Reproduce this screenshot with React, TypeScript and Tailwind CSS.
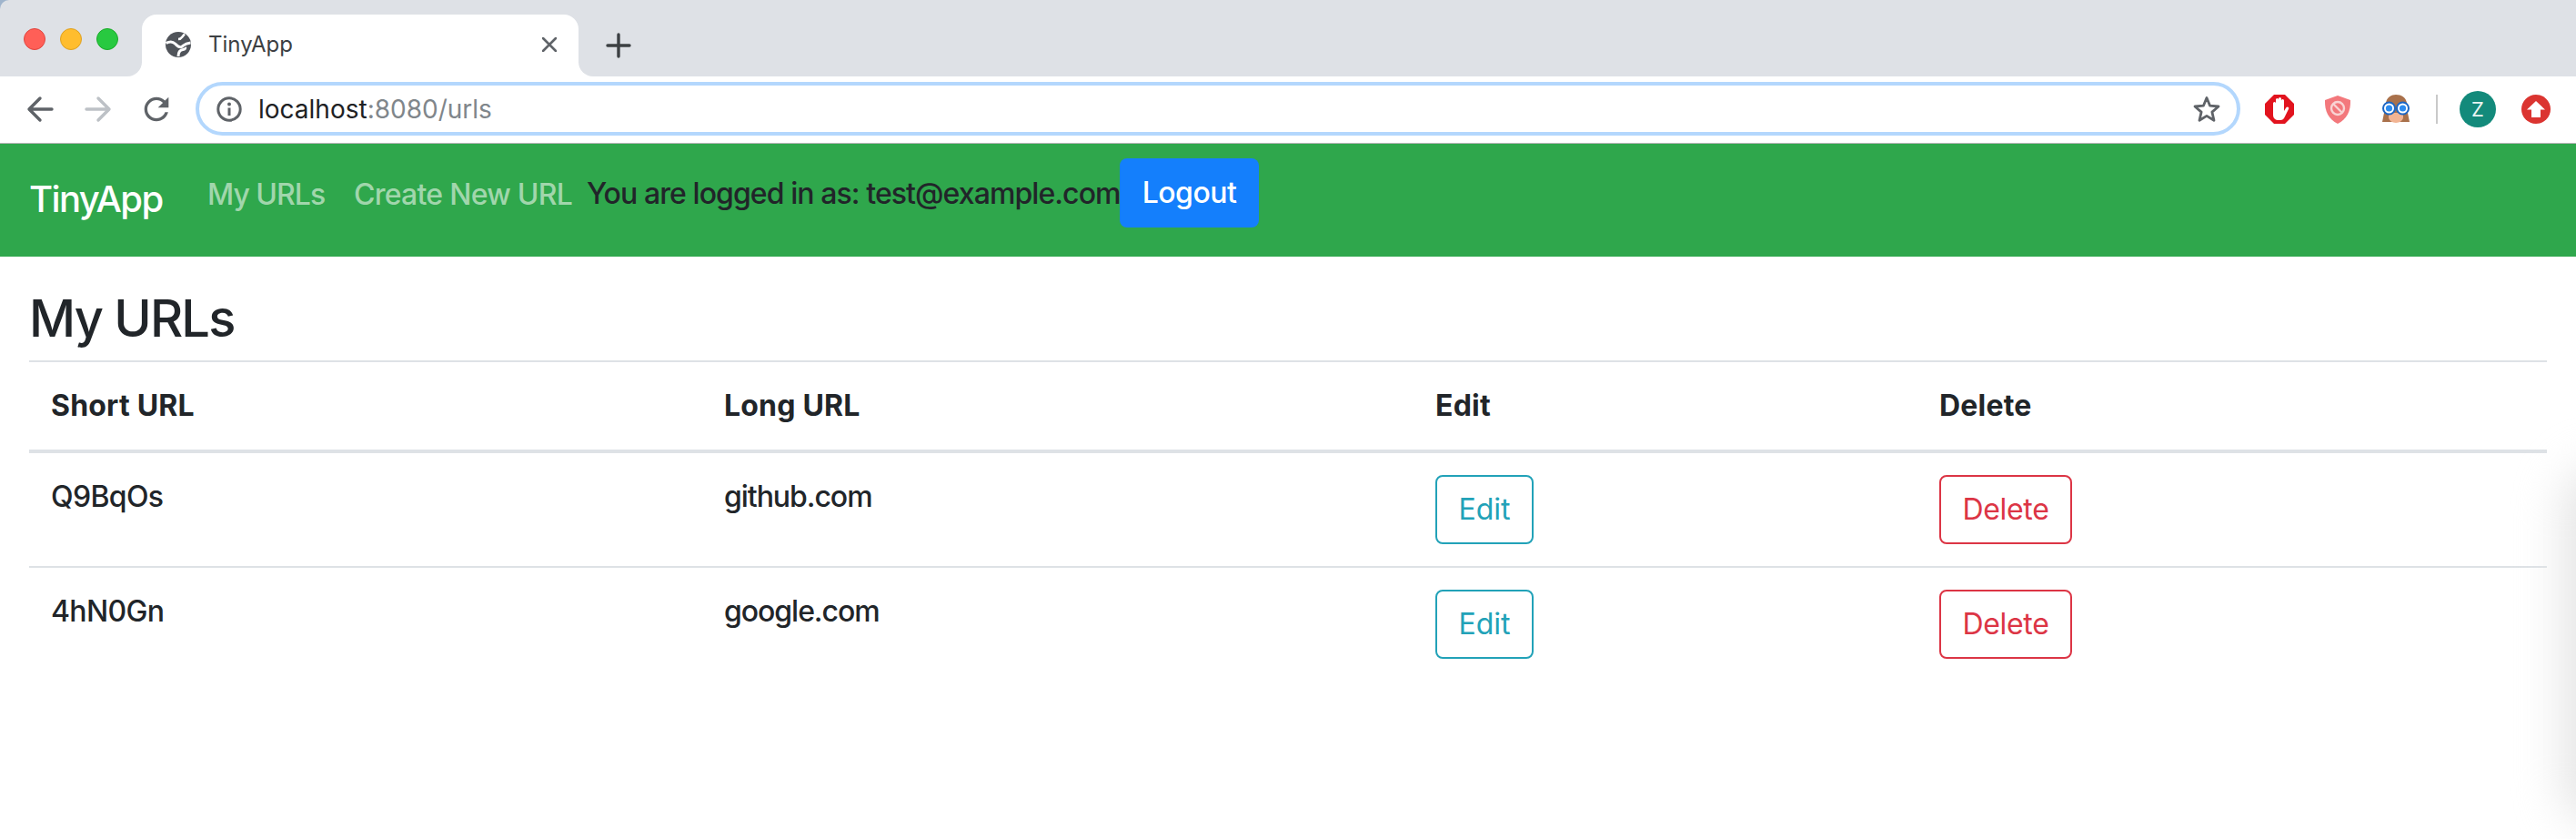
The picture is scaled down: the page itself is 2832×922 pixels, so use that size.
export default function App() {
  const cell = "p-6 align-top text-left";
  const head = "border-y-2 border-b-4 border-[#dee2e6] p-6 pb-6 pt-6 align-top text-left font-bold tracking-[0.2px]";
  const rows = [
    ["Q9BqOs", "github.com"],
    ["4hN0Gn", "google.com"],
  ];
  return (
    <div className="relative h-[922px] overflow-hidden bg-white text-[32px] leading-[48px] text-[#212529] font-['Inter',sans-serif]">
      {/* Tab strip */}
      <div className="bg-[#9fb4cc]">
        <div className="flex h-[84px] rounded-tl-[10px] bg-[#dee1e6]">
          <div className="ml-[26px] mr-[26px] flex h-[86px] items-center gap-4">
            <span className="h-6 w-6 rounded-full border border-[#e0443e] bg-[#ff5f57]" />
            <span className="h-6 w-6 rounded-full border border-[#dea123] bg-[#ffbd2e]" />
            <span className="h-6 w-6 rounded-full border border-[#1aab29] bg-[#28c940]" />
          </div>
          <div className="relative mt-4 flex h-[68px] w-[480px] items-center rounded-t-2xl bg-white pl-[26px] pb-[2px]">
            <div className="absolute -left-4 bottom-0 h-4 w-4 bg-white">
              <div className="h-full w-full rounded-br-2xl bg-[#dee1e6]" />
            </div>
            <div className="absolute -right-4 bottom-0 h-4 w-4 bg-white">
              <div className="h-full w-full rounded-bl-2xl bg-[#dee1e6]" />
            </div>
            <svg width="28" height="28" viewBox="0 0 28 28">
              <circle cx="14" cy="14" r="14" fill="#50545a" />
              <path d="M0.5 12.5C5 10 8 10.5 10.5 13C12.5 15 14.5 17.5 17.5 16.5C20 15.5 20 13 27.5 12" stroke="#fff" strokeWidth="3" fill="none" />
              <path d="M14 27C14 23 16 20 19 19.5C21.5 19 22 18 21.5 17" stroke="#fff" strokeWidth="3" fill="none" />
              <path d="M21 2.5C18 5 18 8 14 8" stroke="#fff" strokeWidth="2.5" fill="none" />
            </svg>
            <span className="ml-[19px] text-[24px] leading-8 text-[#3c4043]">TinyApp</span>
            <svg className="ml-auto mr-[24px]" width="16" height="16" viewBox="0 0 16 16">
              <path d="M1 1L15 15M15 1L1 15" stroke="#5f6368" strokeWidth="2.6" strokeLinecap="round" />
            </svg>
          </div>
          <svg className="ml-[30px] mt-[36px]" width="28" height="28" viewBox="0 0 28 28">
            <path d="M14 2V26M2 14H26" stroke="#3c4043" strokeWidth="3.4" strokeLinecap="round" />
          </svg>
        </div>
      </div>

      {/* Toolbar */}
      <div className="flex h-[74px] items-center border-b border-[#b5b5b5] bg-white pb-[2px] pl-6">
        <div className="flex items-center gap-6">
          <svg width="40" height="40" viewBox="0 0 40 40" fill="none">
            <path d="M33 20H9M20 8L8 20L20 32" stroke="#5f6368" strokeWidth="3.4" strokeLinecap="round" strokeLinejoin="round" />
          </svg>
          <svg width="40" height="40" viewBox="0 0 40 40" fill="none">
            <path d="M7 20H31M20 8L32 20L20 32" stroke="#bdc1c6" strokeWidth="3.4" strokeLinecap="round" strokeLinejoin="round" />
          </svg>
          <svg width="40" height="40" viewBox="0 0 24 24">
            <path fill="#5f6368" d="M17.65 6.35C16.2 4.9 14.21 4 12 4c-4.42 0-7.99 3.58-7.99 8s3.57 8 7.99 8c3.73 0 6.84-2.55 7.73-6h-2.08c-.82 2.33-3.04 4-5.65 4-3.31 0-6-2.69-6-6s2.69-6 6-6c1.66 0 3.14.69 4.22 1.78L13 11h7V4l-2.35 2.35z" />
          </svg>
        </div>
        <div className="ml-[23px] flex h-[59px] w-[2248px] items-center rounded-full border-4 border-[#b3d7fd] pl-[19px] pr-[17px]">
          <svg width="28" height="28" viewBox="0 0 28 28" fill="none">
            <circle cx="14" cy="14" r="12.2" stroke="#5f6368" strokeWidth="3" />
            <circle cx="14" cy="8.5" r="2" fill="#5f6368" />
            <path d="M14 12.5V21" stroke="#5f6368" strokeWidth="3" />
          </svg>
          <span className="ml-[18px] text-[28px] leading-9 text-[#202124]">
            localhost<span className="text-[#80868b]">:8080/urls</span>
          </span>
          <svg className="ml-auto" width="32" height="32" viewBox="0 0 32 32" fill="none">
            <path d="M16 3.5L19.6 12.2L29 13L21.9 19.1L24 28.3L16 23.4L8 28.3L10.1 19.1L3 13L12.4 12.2Z" stroke="#5f6368" strokeWidth="2.8" strokeLinejoin="round" />
          </svg>
        </div>
        <div className="ml-[27px] flex items-center gap-8">
          <svg width="32" height="32" viewBox="0 0 32 32">
            <path d="M10 0H22L32 10V22L22 32H10L0 22V10Z" fill="#e2131e" />
            <path d="M9 17V9.5a1.5 1.5 0 0 1 3 0V15V5.5a1.5 1.5 0 0 1 3 0V15V4.5a1.5 1.5 0 0 1 3 0V15V6.5a1.5 1.5 0 0 1 3 0V18L23.5 14a1.6 1.6 0 0 1 2.7 1.6L21.5 25a5 5 0 0 1-4.5 3H14.5C11 28 9 25.5 9 22Z" fill="#fff" />
          </svg>
          <svg width="32" height="32" viewBox="0 0 32 32">
            <path d="M16 1L30 6C30.5 18 26 27 16 32C6 27 1.5 18 2 6Z" fill="#f3787c" />
            <circle cx="16" cy="15" r="7" fill="none" stroke="#f9d3d3" strokeWidth="2.4" />
            <path d="M11 10L21 20" stroke="#f9d3d3" strokeWidth="2.4" />
          </svg>
          <svg width="32" height="32" viewBox="0 0 32 32">
            <path d="M5 9C6 3 11 0 16 0C22 0 27 3 28 9L29 20L31 30H22H10H1L3 20Z" fill="#a9714b" />
            <path d="M8 20H24V25C24 28 20 31 16 31C12 31 8 28 8 25Z" fill="#f2b493" />
            <circle cx="8.5" cy="15" r="6.5" fill="#fff" stroke="#1c66c4" strokeWidth="2" />
            <circle cx="23.5" cy="15" r="6.5" fill="#fff" stroke="#1c66c4" strokeWidth="2" />
            <circle cx="8.5" cy="15" r="3.6" fill="#2d8cf0" />
            <circle cx="23.5" cy="15" r="3.6" fill="#2d8cf0" />
          </svg>
        </div>
        <div className="ml-[28px] h-8 w-[2px] bg-[#c9c9c9]" />
        <div className="ml-6 flex h-10 w-10 items-center justify-center rounded-full bg-[#138a7b] text-[22px] leading-none text-[#e8f4f2]">Z</div>
        <div className="ml-7 flex h-8 w-8 items-center justify-center rounded-full bg-[#db3430]">
          <svg width="20" height="18" viewBox="0 0 20 18">
            <path d="M10 0L20 9.5H15V18H5V9.5H0Z" fill="#fff" />
          </svg>
        </div>
      </div>

      {/* Navbar */}
      <nav className="flex h-[124px] items-start whitespace-nowrap bg-[#2fa74c] pl-8 font-[450]">
        <a className="mt-[37px] w-[147px] text-[40px] leading-[48px] tracking-[-1.6px] text-white">TinyApp</a>
        <a className="ml-[49px] mt-[32px] w-[130px] tracking-[-1px] text-[#a1d6ac]">My URLs</a>
        <a className="ml-[31px] mt-[32px] w-[240px] tracking-[-0.75px] text-[#a1d6ac]">Create New URL</a>
        <span className="ml-4 mt-[31px] w-[586px] tracking-[-0.92px]">You are logged in as: test@example.com</span>
        <button className="mt-4 h-[76px] w-[153px] rounded-lg bg-[#147ffc] tracking-[-0.5px] text-white">Logout</button>
      </nav>

      {/* Content */}
      <main className="px-8 pt-[31px] font-[450]">
        <h1 className="pb-[9px] text-[56px] font-medium leading-[74px] tracking-[-1.8px]">My URLs</h1>
        <table className="w-full table-fixed border-separate border-spacing-0">
          <thead>
            <tr>
              <th className={`${head} w-[740px]`}>Short URL</th>
              <th className={`${head} w-[782px]`}>Long URL</th>
              <th className={`${head} w-[554px]`}>Edit</th>
              <th className={head}>Delete</th>
            </tr>
          </thead>
          <tbody>
            {rows.map(([s, l], i) => {
              const line = i === 0 ? "border-b-2 border-[#dee2e6]" : "";
              return (
                <tr key={s}>
                  <td className={`${cell} ${line} tracking-[-0.65px]`}>{s}</td>
                  <td className={`${cell} ${line} tracking-[-1.05px]`}>{l}</td>
                  <td className={`${cell} ${line}`}>
                    <button className="block h-[76px] w-[108px] rounded-lg border-2 border-[#22a2b8] font-normal text-[#22a2b8]">Edit</button>
                  </td>
                  <td className={`${cell} ${line}`}>
                    <button className="block h-[76px] w-[146px] rounded-lg border-2 border-[#dc3545] font-normal tracking-[-0.3px] text-[#dc3545]">Delete</button>
                  </td>
                </tr>
              );
            })}
          </tbody>
        </table>
      </main>

      {/* Soft shadow at the window edge */}
      <div className="pointer-events-none absolute right-[-84px] top-[510px] h-[400px] w-[100px] rounded-full bg-[#e6e6e6] blur-[24px]" />
    </div>
  );
}
